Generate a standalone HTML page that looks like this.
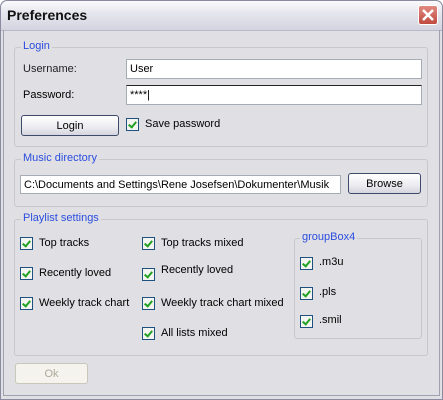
<!DOCTYPE html>
<html><head><style>
body{margin:0;width:443px;height:400px;overflow:hidden;font-family:"Liberation Sans",sans-serif;font-size:11px;color:#000}
.win{position:absolute;left:0;top:0;width:441px;height:398px;border:1px solid #8a8aa0;background:#e0dfe3;border-radius:7px 7px 0 0}
.title{position:absolute;left:0;top:0;width:441px;height:29px;background:linear-gradient(#fbfbfd,#e6e6ee 40%,#d4d4e0);border-radius:7px 7px 0 0;border-bottom:1px solid #b8b8c8}
.title span{position:absolute;left:6px;top:6px;font-size:14px;font-weight:bold;color:#111}
.close{position:absolute;left:417px;top:4px;width:20px;height:20px;border:1px solid #fff;border-radius:3px;background:linear-gradient(#e08a80,#c04a40);box-sizing:border-box}
.body{position:absolute;left:3px;top:30px;width:435px;height:365px;border:1px solid #a0a0b0;border-top:none}
.g{position:absolute;border:1px solid #c8c7cc;border-radius:3px}
.lg{position:absolute;top:-8px;left:6px;background:#e0dfe3;color:#2a4de0;padding:0 2px;font-size:11px;white-space:nowrap}
.t{position:absolute;font-size:11px;white-space:nowrap}
.in{position:absolute;background:#fff;border:1px solid #a5acb5;box-sizing:border-box;font-size:11px;padding:3px 3px;white-space:nowrap;overflow:hidden}
.btn{position:absolute;border:1px solid #3c4a6c;border-radius:3px;background:linear-gradient(#fff,#ecebf0 60%,#d6d5de);box-sizing:border-box;text-align:center;font-size:11px}
.cb{position:absolute;width:13px;height:13px;border:1px solid #1c5180;background:#f4f4f0;box-sizing:border-box}
.cb:after{content:"";position:absolute;left:3px;top:1px;width:3px;height:6px;border:solid #21a121;border-width:0 2px 2px 0;transform:rotate(40deg)}
</style></head><body>
<div class="win">
<div class="title"><span>Preferences</span>
<div class="close"><svg width="18" height="18" style="position:absolute;left:0;top:0"><path d="M4 4L14 14M14 4L4 14" stroke="#fff" stroke-width="2.5"/></svg></div></div>
</div>
<div class="g" style="left:14px;top:47px;width:412px;height:98px"><span class="lg">Login</span></div>
<div class="t" style="left:23px;top:63px;color:#222">Username:</div>
<div class="in" style="left:126px;top:59px;width:296px;height:20px">User</div>
<div class="t" style="left:23px;top:89px">Password:</div>
<div class="in" style="left:126px;top:85px;width:296px;height:20px;border-color:#222 #a5acb5 #a5acb5 #a5acb5">****|</div>
<div class="btn" style="left:21px;top:115px;width:98px;height:21px;line-height:20px">Login</div>
<div class="cb" style="left:126px;top:118px"></div><div class="t" style="left:145px;top:118px">Save password</div>

<div class="g" style="left:14px;top:159px;width:412px;height:46px"><span class="lg">Music directory</span></div>
<div class="in" style="left:20px;top:175px;width:321px;height:19px;padding:3px 3px">C:\Documents and Settings\Rene Josefsen\Dokumenter\Musik</div>
<div class="btn" style="left:348px;top:173px;width:73px;height:21px;line-height:20px">Browse</div>

<div class="g" style="left:14px;top:219px;width:412px;height:135px"><span class="lg">Playlist settings</span></div>
<div class="cb" style="left:20px;top:237px"></div><div class="t" style="left:39px;top:237px">Top tracks</div>
<div class="cb" style="left:20px;top:267px"></div><div class="t" style="left:39px;top:267px">Recently loved</div>
<div class="cb" style="left:20px;top:297px"></div><div class="t" style="left:39px;top:297px">Weekly track chart</div>
<div class="cb" style="left:142px;top:237px"></div><div class="t" style="left:161px;top:237px">Top tracks mixed</div>
<div class="cb" style="left:142px;top:268px"></div><div class="t" style="left:161px;top:264px">Recently loved</div>
<div class="cb" style="left:142px;top:297px"></div><div class="t" style="left:161px;top:297px">Weekly track chart mixed</div>
<div class="cb" style="left:142px;top:327px"></div><div class="t" style="left:161px;top:327px">All lists mixed</div>
<div class="g" style="left:294px;top:238px;width:126px;height:99px"><span class="lg" style="left:5px">groupBox4</span></div>
<div class="cb" style="left:300px;top:257px"></div><div class="t" style="left:319px;top:256px">.m3u</div>
<div class="cb" style="left:300px;top:287px"></div><div class="t" style="left:319px;top:286px">.pls</div>
<div class="cb" style="left:300px;top:315px"></div><div class="t" style="left:319px;top:314px">.smil</div>

<div class="btn" style="left:15px;top:363px;width:73px;height:21px;line-height:20px;border-color:#c9c7ba;background:#f4f3ee;color:#aca899">Ok</div>
<div class="body"></div>
</body></html>
